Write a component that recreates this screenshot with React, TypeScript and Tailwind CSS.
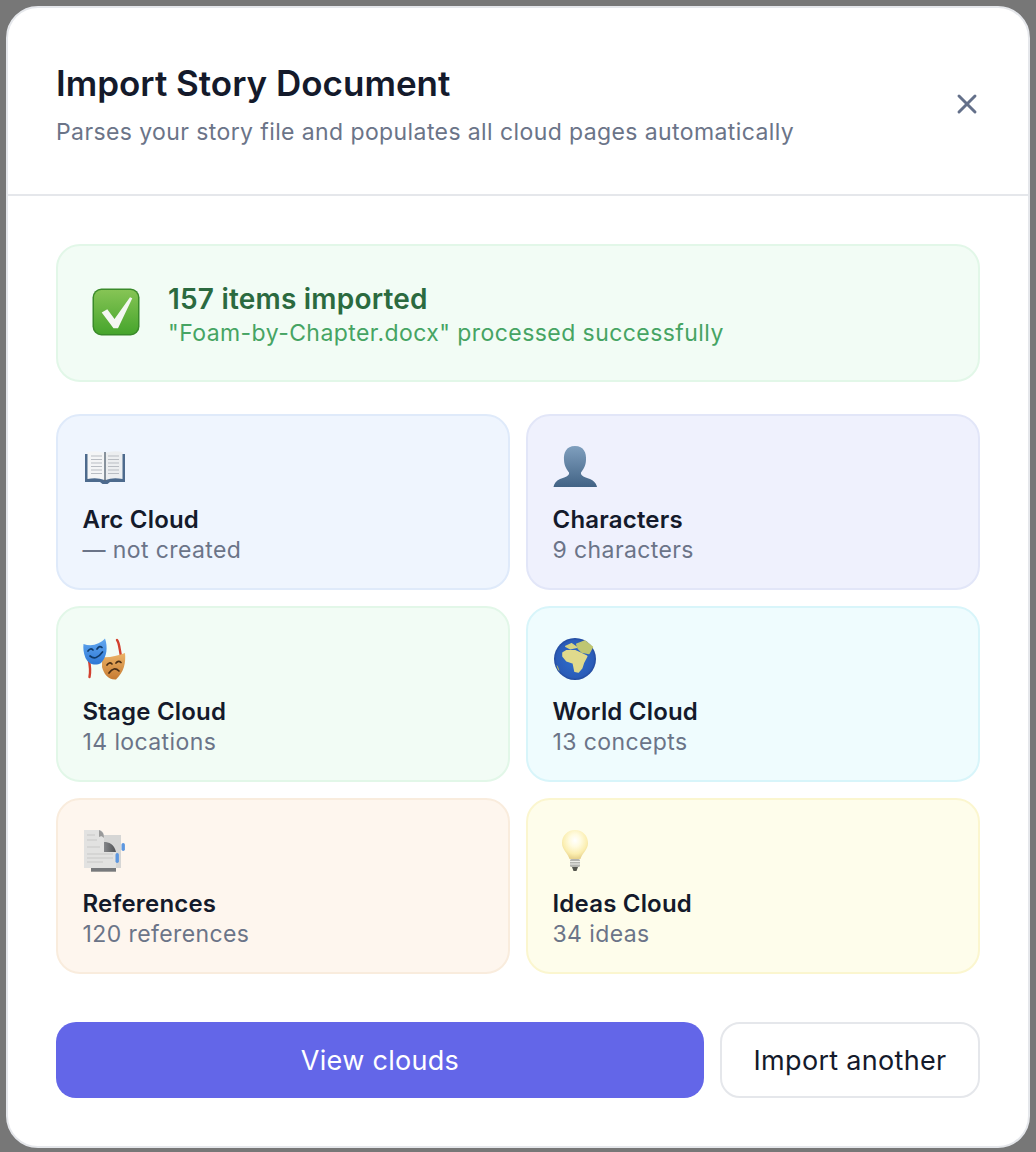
import { ReactNode } from "react";
import { X } from "lucide-react";

function CheckEmoji() {
  return (
    <svg viewBox="0 0 48 48" className="h-12 w-12 shrink-0">
      <defs>
        <linearGradient id="check-bg" x1="0" y1="0" x2="0" y2="1">
          <stop offset="0" stopColor="#86c455" />
          <stop offset="1" stopColor="#46a52c" />
        </linearGradient>
      </defs>
      <rect x="0.5" y="0.5" width="47" height="47" rx="9" fill="#3a8a2a" />
      <rect x="2" y="2" width="44" height="44" rx="7.500" fill="url(#check-bg)" />
      <path d="M9.700 24.500 L15.300 21.300 L22.500 31 L38 9.300 L40.300 10.300 L26 40.300 L21.500 40.300 Z" fill="#f4f7f2" />
    </svg>
  );
}

function BookEmoji() {
  return (
    <svg viewBox="0 0 44 36" className="h-9 w-11">
      <defs>
        <filter id="book-soft">
          <feGaussianBlur stdDeviation="0.35" />
        </filter>
      </defs>
      <g filter="url(#book-soft)">
        <path d="M2 5 H5 V29 H18 L22 31 L26 29 H39 V5 H42 V33 H27 L24.500 35 H19.500 L17 33 H2 Z" fill="#4d6a8d" />
        <path d="M4.500 3 Q14 1 21.500 4 V31 Q14 28 4.500 30 Z" fill="#f4f5f6" />
        <path d="M39.500 3 Q30 1 22.500 4 V31 Q30 28 39.500 30 Z" fill="#eceef0" />
        <path
          d="M8 7 H19 M8 10.500 H19 M8 14 H19 M8 17.500 H19 M8 21 H19 M8 24.500 H19 M25 7 H36 M25 10.500 H36 M25 14 H36 M25 17.500 H36 M25 21 H36 M25 24.500 H36"
          stroke="#b9bdc3"
          strokeWidth="1"
        />
        <rect x="21.300" y="3" width="1.400" height="29" fill="#5c6875" />
      </g>
    </svg>
  );
}

function PersonEmoji() {
  return (
    <svg viewBox="0 0 44 42" className="h-[42px] w-11">
      <defs>
        <linearGradient id="person-bg" x1="0" y1="0" x2="0" y2="1">
          <stop offset="0" stopColor="#7f9fbe" />
          <stop offset="1" stopColor="#426385" />
        </linearGradient>
      </defs>
      <path
        d="M22 0 C31 0 33.500 7 33 14 C32.800 20 30 24 28 26.500 V28 C29.500 31 33 31.500 37 33 C41 34.500 43.500 38 44 41 H0.500 C1 38 3 34.500 7 33 C11 31.500 14.500 31 16 28 V26.500 C14 24 11.200 20 11 14 C10.500 7 13 0 22 0 Z"
        fill="url(#person-bg)"
      />
    </svg>
  );
}

function MasksEmoji() {
  return (
    <svg viewBox="0 0 44 42" className="h-[42px] w-11">
      <defs>
        <linearGradient id="mask-blue" x1="0" y1="0" x2="0" y2="1">
          <stop offset="0" stopColor="#62a8f0" />
          <stop offset="1" stopColor="#2f78d6" />
        </linearGradient>
        <linearGradient id="mask-orange" x1="0" y1="0" x2="0" y2="1">
          <stop offset="0" stopColor="#ecb468" />
          <stop offset="1" stopColor="#c67a32" />
        </linearGradient>
        <filter id="masks-soft">
          <feGaussianBlur stdDeviation="0.25" />
        </filter>
      </defs>
      <g filter="url(#masks-soft)">
        <path d="M5.500 20 C7 27 8 32 6.500 39" stroke="#d23f2e" strokeWidth="2.400" fill="none" strokeLinecap="round" />
        <path d="M34 2 C37 6 36 12 39 22" stroke="#d23f2e" strokeWidth="2.400" fill="none" strokeLinecap="round" />
        <path d="M19 19 C25 20 34 18 42 15 C43 25 41 34 33 41.500 C25 42 21 36 19 29 Z" fill="url(#mask-orange)" />
        <path d="M24 27 Q26.500 23.500 29 26 M33 25 Q35.500 22 38 24.500 M26 35 Q31 28 36 33" stroke="#4a2d14" strokeWidth="1.700" fill="none" strokeLinecap="round" />
        <path d="M0.500 6 C9 9 17 6 22 0.500 C25 9 24 19 18 25 C13 28 6 27 2.500 20 C0.500 15 0 10 0.500 6 Z" fill="url(#mask-blue)" />
        <path d="M5 13 Q7.500 9.500 10 12 M14 11 Q16.500 7 19 9.500 M7 18 Q13 23 19.500 14" stroke="#103a6b" strokeWidth="1.700" fill="none" strokeLinecap="round" />
      </g>
    </svg>
  );
}

function GlobeEmoji() {
  return (
    <svg viewBox="0 0 44 42" className="h-[42px] w-11">
      <defs>
        <radialGradient id="globe-bg" cx="0.5" cy="0.5" r="0.55">
          <stop offset="0" stopColor="#2f6ecd" />
          <stop offset="0.8" stopColor="#2a5cb8" />
          <stop offset="1" stopColor="#1b3a86" />
        </radialGradient>
        <filter id="globe-soft">
          <feGaussianBlur stdDeviation="0.3" />
        </filter>
      </defs>
      <circle cx="22" cy="21" r="21" fill="url(#globe-bg)" />
      <g filter="url(#globe-soft)">
        <path
          d="M10 15 L13.700 12.700 L22 12.700 L27 15 L33.700 18.300 L30.300 25 L28.700 30 L25.300 34 L22 33.300 L20.300 25 L13.700 22.700 L10 18.300 Z"
          fill="#e0da8c"
          stroke="#e0da8c"
          strokeWidth="1.600"
          strokeLinejoin="round"
        />
        <path d="M12.700 8.300 L18.700 5.700 L23.700 9.300 L17 10.700 Z" fill="#d6d484" stroke="#d6d484" strokeWidth="1.400" strokeLinejoin="round" />
        <path d="M23.700 6.200 L32 3 L39.500 9 L36 15.500 L28.700 14 L25.300 10.500 Z" fill="#bfc672" stroke="#bfc672" strokeWidth="1.400" strokeLinejoin="round" />
        <path d="M3.500 27 C5 28 6 31 6.500 33.500 C5 32 4 30 3.500 27 Z" fill="#b9bb68" />
      </g>
    </svg>
  );
}

function DocsEmoji() {
  return (
    <svg viewBox="0 0 44 42" className="h-[42px] w-11">
      <defs>
        <filter id="docs-soft">
          <feGaussianBlur stdDeviation="0.5" />
        </filter>
        <linearGradient id="docs-shade" x1="0" y1="0" x2="1" y2="0">
          <stop offset="0" stopColor="#85878a" />
          <stop offset="1" stopColor="#505255" />
        </linearGradient>
      </defs>
      <g filter="url(#docs-soft)">
        <path d="M8 41.700 H33 V38 H8 Z" fill="#77797b" />
        <path d="M19 5 H38 V38 H8 V30 H19 Z" fill="#d6d6d5" />
        <path d="M1 0 H16 C19 0 21 3 21 5 V22 H33 V38 H1 Z" fill="#e2e2e1" />
        <path d="M21 12 C26 12 31 14 33 22 H21 Z" fill="url(#docs-shade)" />
        <path d="M16 0 C19 1 21 3 21 8 C19 6 18 6 16 7 Z" fill="#9a9a9a" />
        <path d="M4 5 H12 M4 10 H14 M4 17 H17 M4 24 H30 M4 28 H30 M4 32 H20" stroke="#c8c8c8" strokeWidth="1.100" />
        <rect x="38.500" y="13" width="3.400" height="8" rx="1.700" fill="#5d97e0" />
        <rect x="32.500" y="23" width="3.400" height="10" rx="1.700" fill="#5d97e0" />
      </g>
    </svg>
  );
}

function BulbEmoji() {
  return (
    <svg viewBox="0 0 44 42" className="h-[42px] w-11">
      <defs>
        <radialGradient id="bulb-bg" cx="0.5" cy="0.36" r="0.62">
          <stop offset="0" stopColor="#ffffff" />
          <stop offset="0.35" stopColor="#fffbe0" />
          <stop offset="0.75" stopColor="#fbeeb0" />
          <stop offset="1" stopColor="#e9d590" />
        </radialGradient>
        <filter id="bulb-soft">
          <feGaussianBlur stdDeviation="0.35" />
        </filter>
      </defs>
      <g filter="url(#bulb-soft)">
        <path d="M22 0 C30 0 35 6 35 13 C35 20 29 23 27.500 29 H16.500 C15 23 9 20 9 13 C9 6 14 0 22 0 Z" fill="url(#bulb-bg)" />
        <rect x="17" y="29" width="10" height="8" rx="1.500" fill="#b4b5b0" />
        <path d="M17 31.500 H27 M17 34 H27" stroke="#eeeeea" strokeWidth="1" />
        <path d="M19 37 H25 L23.500 41 H20.500 Z" fill="#55564f" />
      </g>
    </svg>
  );
}

interface CloudCardProps {
  icon: ReactNode;
  title: string;
  subtitle: string;
  className: string;
}

function CloudCard({ icon, title, subtitle, className }: CloudCardProps) {
  return (
    <div className={`flex h-[176px] flex-col rounded-[24px] border-2 px-[24.5px] pt-[29px] ${className}`}>
      <div className="flex h-[44px] items-center">{icon}</div>
      <div className="mt-[16px] text-[24px] font-semibold leading-[30px] tracking-[0.2px] text-[#141a2b]">{title}</div>
      <div className="text-[23px] leading-[30px] tracking-[0.4px] text-[#6b7488]">{subtitle}</div>
    </div>
  );
}

const cards: CloudCardProps[] = [
  { icon: <BookEmoji />, title: "Arc Cloud", subtitle: "— not created", className: "border-[#dfeafa] bg-[#eff5fe]" },
  { icon: <PersonEmoji />, title: "Characters", subtitle: "9 characters", className: "border-[#e2e6f8] bg-[#eff1fd]" },
  { icon: <MasksEmoji />, title: "Stage Cloud", subtitle: "14 locations", className: "border-[#e2f7e8] bg-[#f2fcf5]" },
  { icon: <GlobeEmoji />, title: "World Cloud", subtitle: "13 concepts", className: "border-[#d8f5fa] bg-[#effcfe]" },
  { icon: <DocsEmoji />, title: "References", subtitle: "120 references", className: "border-[#f9ecdd] bg-[#fef6ee]" },
  { icon: <BulbEmoji />, title: "Ideas Cloud", subtitle: "34 ideas", className: "border-[#fbf6cf] bg-[#fefdeb]" },
];

export default function App() {
  return (
    <div className="h-[1152px] w-[1036px] overflow-hidden bg-[#777777] p-[6px] font-['Inter',sans-serif]">
      <div className="h-[1142px] w-[1024px] overflow-hidden rounded-[32px] border-2 border-[#e5e7eb] bg-white">
        <div className="flex h-[188px] items-start justify-between border-b-2 border-[#e5e7eb] pl-[48px] pr-[45px] pt-[53px]">
          <div>
            <h1 className="text-[35px] font-semibold leading-[44px] text-[#141a2b]">Import Story Document</h1>
            <p className="mt-[11px] text-[23px] leading-[32px] tracking-[0.4px] text-[#6b7488]">
              Parses your story file and populates all cloud pages automatically
            </p>
          </div>
          <X className="mt-[27px] h-8 w-8 text-[#64708a]" strokeWidth={2.2} />
        </div>
        <div className="px-[48px] pt-[48px]">
          <div className="flex h-[138px] items-center gap-[28px] rounded-[24px] border-2 border-[#e2f7e8] bg-[#f2fcf5] pl-[34px]">
            <div className="mb-[2px]">
              <CheckEmoji />
            </div>
            <div className="pt-[6px]">
              <div className="text-[28px] font-semibold leading-[34px] tracking-[0.2px] text-[#2b6a3f]">157 items imported</div>
              <div className="text-[23px] leading-[34px] tracking-[0.43px] text-[#46a463]">
                "Foam-by-Chapter.docx" processed successfully
              </div>
            </div>
          </div>
          <div className="mt-[32px] grid grid-cols-2 gap-4">
            {cards.map((card) => (
              <CloudCard key={card.title} {...card} />
            ))}
          </div>
          <div className="mt-[48px] flex gap-4">
            <button className="h-[76px] w-[648px] rounded-[20px] bg-[#6366e8] pt-[2px] text-[27px] tracking-[0.3px] text-white">
              View clouds
            </button>
            <button className="h-[76px] w-[260px] rounded-[20px] border-2 border-[#e5e7eb] bg-white pt-[2px] text-[27px] tracking-[0.3px] text-[#141a2b]">
              Import another
            </button>
          </div>
        </div>
      </div>
    </div>
  );
}
